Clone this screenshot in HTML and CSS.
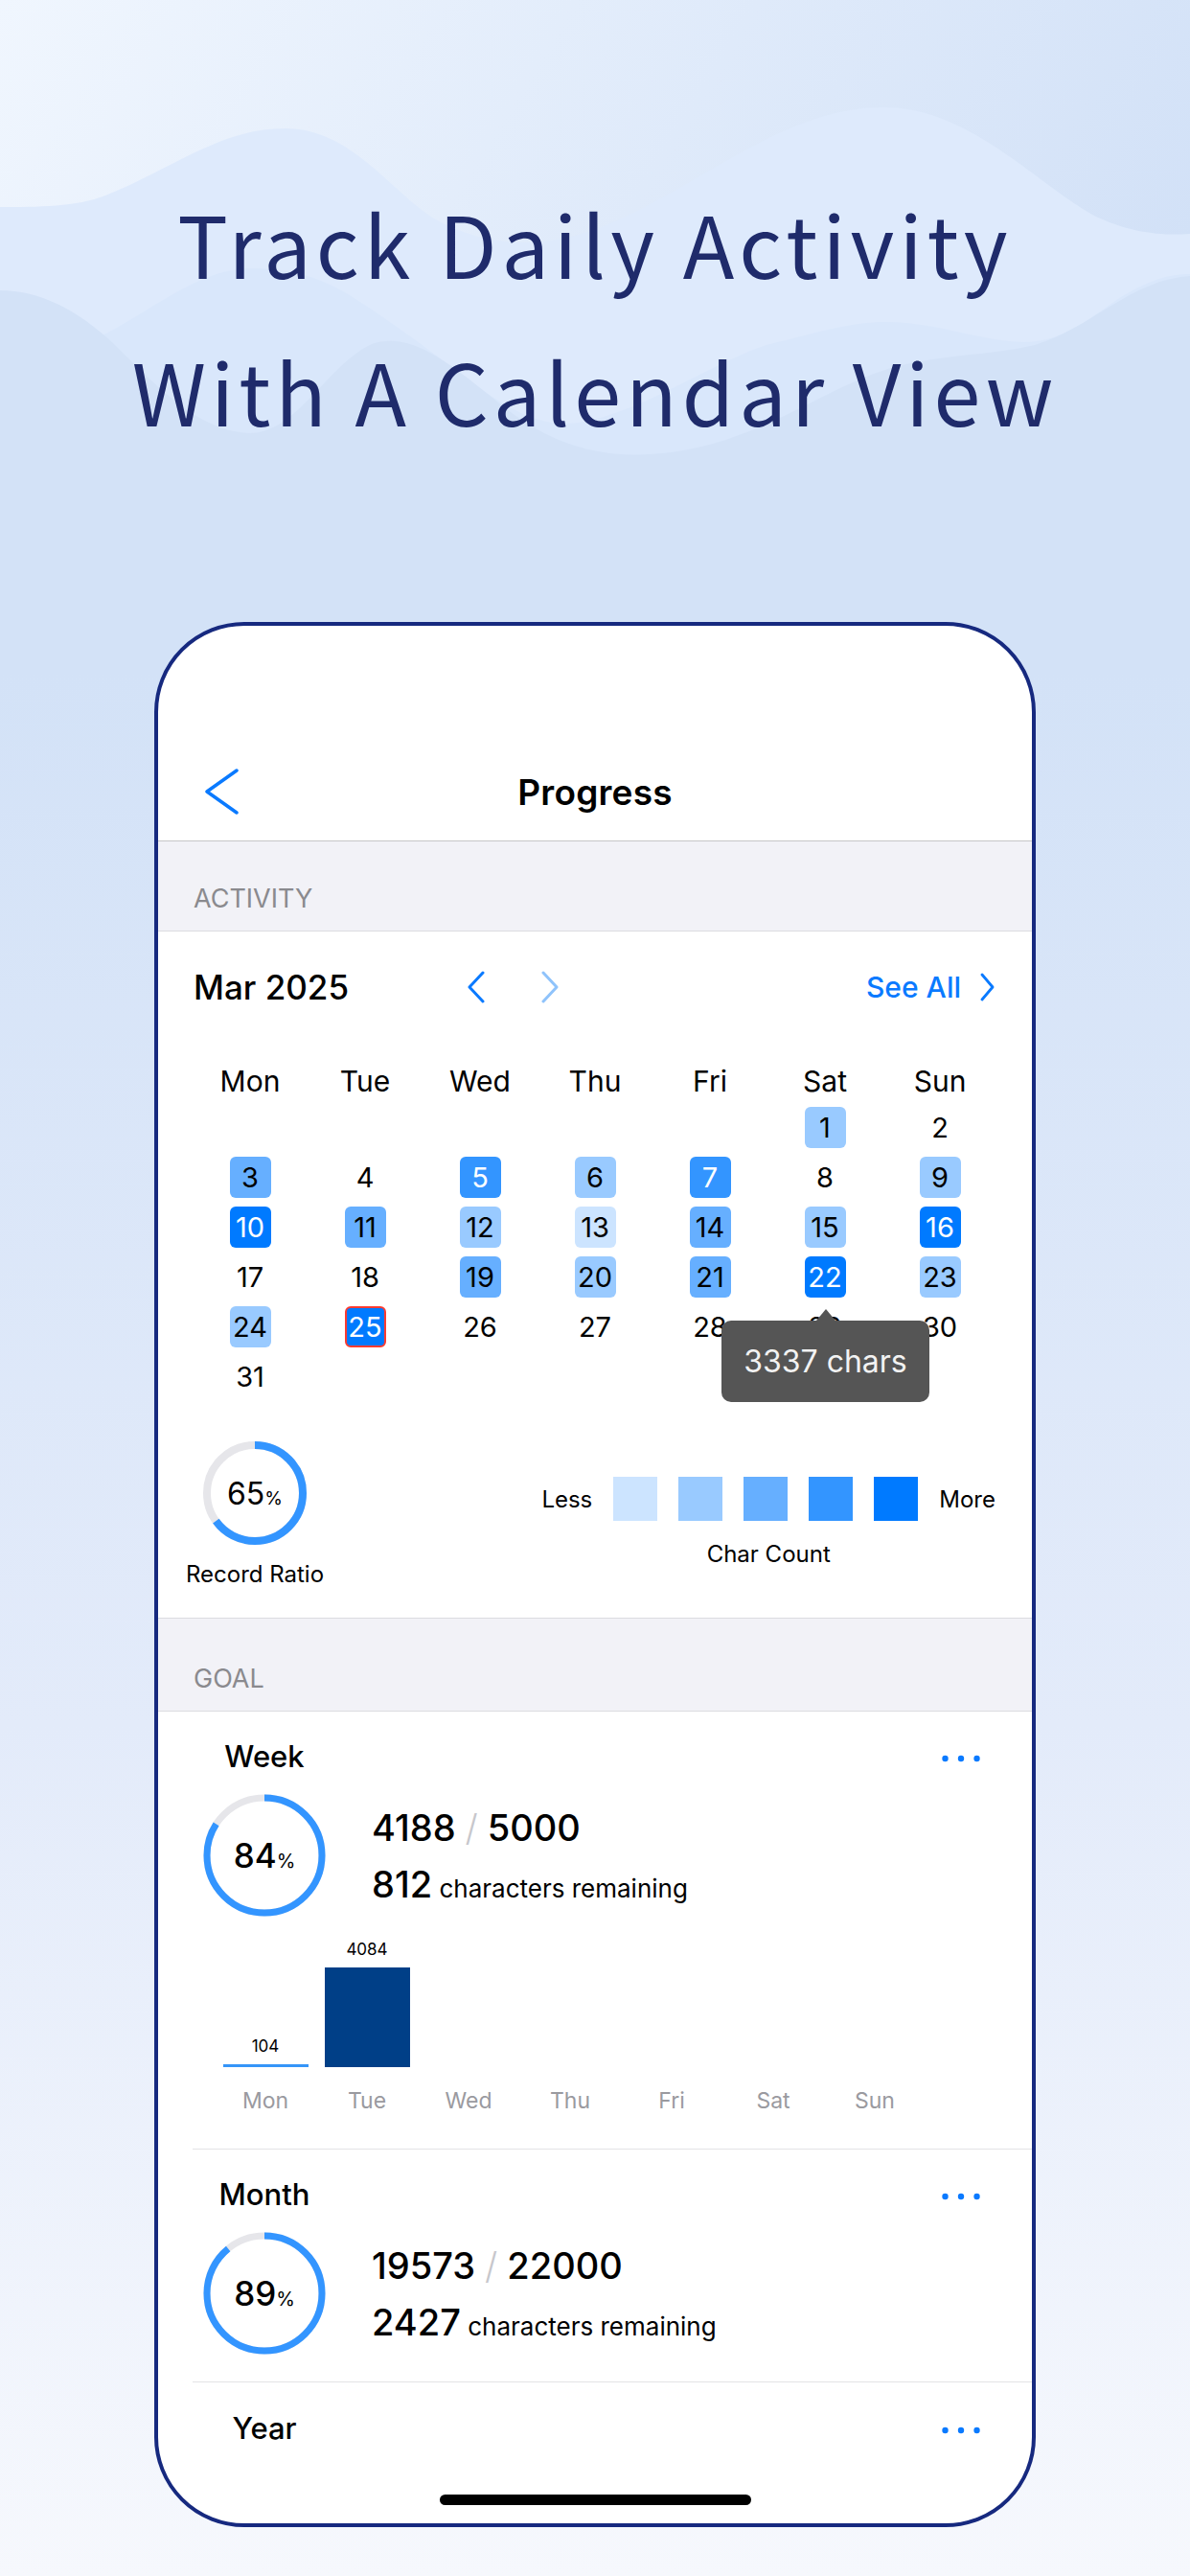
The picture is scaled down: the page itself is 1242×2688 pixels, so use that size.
FILE: index.html
```html
<!DOCTYPE html>
<html lang="en">
<head>
    <meta charset="UTF-8">
    <meta name="viewport" content="width=device-width, initial-scale=1.0">
    <title>Progress</title>
    <link rel="stylesheet" href="styles.css">
</head>
<body>
<div class="page">
    <!-- background waves -->
    <svg class="waves" viewBox="0 0 1242 700" preserveAspectRatio="none">
        <defs>
            <linearGradient id="sky" x1="0" y1="0" x2="1" y2="0.35">
                <stop offset="0" stop-color="#f0f6fe"/>
                <stop offset="1" stop-color="#d2e1f7"/>
            </linearGradient>
        </defs>
        <rect width="1242" height="700" fill="url(#sky)"/>
        <path d="M0,216 C40,216 80,216 110,204 C180,176 230,134 297,134 C370,134 410,205 460,232 C520,262 580,258 640,232 C740,188 820,112 923,112 C1010,112 1080,190 1140,224 C1180,244 1215,246 1242,244 L1242,700 L0,700 Z" fill="#deeafc"/>
        <path d="M0,380 C50,380 80,362 111,348 C160,322 210,280 261,280 C300,280 330,288 360,305 C400,330 430,352 470,382 C520,420 560,450 610,440 C680,425 740,380 800,360 C860,345 890,336 923,336 C980,336 1020,356 1069,357 C1110,357 1140,330 1170,310 C1200,292 1220,286 1242,286 L1242,700 L0,700 Z" fill="#d9e7fb"/>
        <path d="M0,303 C40,303 80,322 120,360 C170,410 210,450 260,452 C310,452 340,382 388,359 C430,345 470,380 520,420 C570,460 620,482 700,472 C800,458 860,404 930,384 C990,368 1030,372 1080,360 C1140,342 1180,292 1242,288 L1242,700 L0,700 Z" fill="#d3e2f7"/>
    </svg>

    <h1 class="headline">
        <span>Track Daily Activity</span>
        <span>With A Calendar View</span>
    </h1>

    <div class="phone">
        <div class="status-bar"></div>

        <div class="nav-bar">
            <svg class="back" width="35" height="48" viewBox="0 0 35 48">
                <path d="M33 2 L2 24 L33 46" fill="none" stroke="#0a7aff" stroke-width="3.5" stroke-linecap="round" stroke-linejoin="round"/>
            </svg>
            <h2>Progress</h2>
            <span></span>
        </div>

        <div class="section-title">ACTIVITY</div>

        <div class="card calendar">
            <div class="cal-head">
                <span class="month">Mar 2025</span>
                <div class="month-nav">
                    <svg width="19" height="34" viewBox="0 0 19 34"><path d="M17 2 L3 17 L17 32" fill="none" stroke="#0a7aff" stroke-width="3" stroke-linecap="round" stroke-linejoin="round"/></svg>
                    <svg width="19" height="34" viewBox="0 0 19 34"><path d="M2 2 L16 17 L2 32" fill="none" stroke="#8fc3fb" stroke-width="3" stroke-linecap="round" stroke-linejoin="round"/></svg>
                </div>
                <a class="see-all">See All
                    <svg width="15" height="30" viewBox="0 0 15 30"><path d="M2 2 L13 15 L2 28" fill="none" stroke="#0a7aff" stroke-width="2.8" stroke-linecap="round" stroke-linejoin="round"/></svg>
                </a>
            </div>

            <div class="weekdays">
                <span>Mon</span><span>Tue</span><span>Wed</span><span>Thu</span><span>Fri</span><span>Sat</span><span>Sun</span>
            </div>

            <div class="days">
                <i></i><i></i><i></i><i></i><i></i>
                <span class="l2">1</span><span>2</span>
                <span class="l3">3</span><span>4</span><span class="l4">5</span><span class="l2">6</span><span class="l4">7</span><span>8</span><span class="l2">9</span>
                <span class="l5">10</span><span class="l3">11</span><span class="l2">12</span><span class="l1">13</span><span class="l3">14</span><span class="l2">15</span><span class="l5">16</span>
                <span>17</span><span>18</span><span class="l3">19</span><span class="l2">20</span><span class="l3">21</span><span class="l5">22<em class="tip">3337 chars</em></span><span class="l2">23</span>
                <span class="l2">24</span><span class="l5 today">25</span><span>26</span><span>27</span><span>28</span><span>29</span><span>30</span>
                <span>31</span>
            </div>

            <div class="cal-foot">
                <div class="ratio">
                    <div class="ring ring-sm">
                        <svg width="108" height="108" viewBox="0 0 108 108">
                            <circle cx="54" cy="54" r="50" class="track" stroke-width="8"/>
                            <circle cx="54" cy="54" r="50" class="arc" stroke-width="8" stroke-dasharray="204.2 400" transform="rotate(-90 54 54)"/>
                        </svg>
                        <span class="ring-value">65<small>%</small></span>
                    </div>
                    <span class="ratio-label">Record Ratio</span>
                </div>
                <div class="legend">
                    <div class="legend-row">
                        <span>Less</span>
                        <i class="l1"></i><i class="l2"></i><i class="l3"></i><i class="l4"></i><i class="l5"></i>
                        <span>More</span>
                    </div>
                    <span class="legend-label">Char Count</span>
                </div>
            </div>
        </div>

        <div class="section-title goal-title">GOAL</div>

        <div class="card goals">
            <div class="goal">
                <div class="goal-head">
                    <span class="goal-name">Week</span>
                    <svg class="dots" width="40" height="8" viewBox="0 0 40 8"><circle cx="3.5" cy="4" r="3.2"/><circle cx="20" cy="4" r="3.2"/><circle cx="36.5" cy="4" r="3.2"/></svg>
                </div>
                <div class="goal-body">
                    <div class="ring">
                        <svg width="128" height="128" viewBox="0 0 128 128">
                            <circle cx="64" cy="64" r="60" class="track" stroke-width="7"/>
                            <circle cx="64" cy="64" r="60" class="arc" stroke-width="7" stroke-dasharray="316.7 400" transform="rotate(-90 64 64)"/>
                        </svg>
                        <span class="ring-value">84<small>%</small></span>
                    </div>
                    <div class="goal-nums">
                        <div class="count">4188<span class="slash">/</span>5000</div>
                        <div class="remain"><b>812</b> characters remaining</div>
                    </div>
                </div>
                <div class="chart">
                    <div class="bars">
                        <div class="col"><span class="val">104</span><i class="bar" style="height: 3px"></i></div>
                        <div class="col"><span class="val">4084</span><i class="bar dark" style="height: 104px"></i></div>
                        <div class="col"></div>
                        <div class="col"></div>
                        <div class="col"></div>
                        <div class="col"></div>
                        <div class="col"></div>
                    </div>
                    <div class="axis">
                        <span>Mon</span><span>Tue</span><span>Wed</span><span>Thu</span><span>Fri</span><span>Sat</span><span>Sun</span>
                    </div>
                </div>
            </div>

            <div class="goal">
                <div class="goal-head">
                    <span class="goal-name">Month</span>
                    <svg class="dots" width="40" height="8" viewBox="0 0 40 8"><circle cx="3.5" cy="4" r="3.2"/><circle cx="20" cy="4" r="3.2"/><circle cx="36.5" cy="4" r="3.2"/></svg>
                </div>
                <div class="goal-body month-body">
                    <div class="ring">
                        <svg width="128" height="128" viewBox="0 0 128 128">
                            <circle cx="64" cy="64" r="60" class="track" stroke-width="7"/>
                            <circle cx="64" cy="64" r="60" class="arc" stroke-width="7" stroke-dasharray="335.5 400" transform="rotate(-90 64 64)"/>
                        </svg>
                        <span class="ring-value">89<small>%</small></span>
                    </div>
                    <div class="goal-nums">
                        <div class="count">19573<span class="slash">/</span>22000</div>
                        <div class="remain"><b>2427</b> characters remaining</div>
                    </div>
                </div>
            </div>

            <div class="goal last">
                <div class="goal-head">
                    <span class="goal-name">Year</span>
                    <svg class="dots" width="40" height="8" viewBox="0 0 40 8"><circle cx="3.5" cy="4" r="3.2"/><circle cx="20" cy="4" r="3.2"/><circle cx="36.5" cy="4" r="3.2"/></svg>
                </div>
            </div>
        </div>

        <div class="home-indicator"></div>
    </div>
</div>
</body>
</html>
```

FILE: styles.css
```css
* {
    box-sizing: border-box;
}
body {
    margin: 0;
    width: 1242px;
    height: 2688px;
    overflow: hidden;
    background: linear-gradient(180deg, #d3e2f7 0, #d3e2f7 700px, #e3ebfa 1800px, #f6f8fd 2688px);
    font-family: Inter, "Liberation Sans", sans-serif;
    color: #000;
}
.page {
    position: relative;
    height: 2688px;
}
.waves {
    position: absolute;
    top: 0;
    left: 0;
    width: 1242px;
    height: 700px;
}

/* headline */
.headline {
    position: relative;
    margin: 0;
    padding-top: 176px;
    text-align: center;
    font-family: "Noto Sans CJK SC", sans-serif;
    font-weight: 400;
    font-size: 88px;
    line-height: 154px;
    letter-spacing: 5px;
    color: #1f2b6b;
}
.headline span {
    display: block;
}

/* phone frame */
.phone {
    position: relative;
    width: 920px;
    height: 1988px;
    margin: 165px auto 0;
    border: 4px solid #16297f;
    border-radius: 94px;
    background: #fff;
    overflow: hidden;
    display: flex;
    flex-direction: column;
}
.status-bar {
    height: 120px;
    flex: none;
}
.nav-bar {
    height: 105px;
    flex: none;
    display: grid;
    grid-template-columns: 1fr auto 1fr;
    align-items: center;
    border-bottom: 1px solid #c6c6c8;
}
.back {
    margin-left: 49px;
    margin-top: 2px;
}
.nav-bar h2 {
    margin: 0;
    margin-top: 3px;
    font-size: 37px;
    font-weight: 600;
    letter-spacing: 0.2px;
}

.section-title {
    height: 94px;
    flex: none;
    background: #f2f2f7;
    border-bottom: 1px solid #dcdce0;
    padding: 0 0 16px 37px;
    display: flex;
    align-items: flex-end;
    font-size: 27px;
    line-height: 34px;
    color: #8a8a8e;
}
.goal-title {
    height: 97px;
}

/* calendar */
.calendar {
    flex: none;
    padding: 33px 36px 30px;
    border-bottom: 1px solid #dcdce0;
}
.cal-head {
    height: 50px;
    display: flex;
    align-items: center;
}
.month {
    width: 286px;
    padding-left: 1px;
    font-size: 35px;
    font-weight: 500;
}
.month-nav {
    display: flex;
    gap: 59px;
}
.see-all {
    margin-left: auto;
    margin-right: 3px;
    display: flex;
    align-items: center;
    gap: 20px;
    color: #0a7aff;
    font-size: 30px;
    font-weight: 500;
}
.weekdays {
    margin-top: 53px;
    display: grid;
    grid-template-columns: repeat(7, 120px);
    font-size: 30px;
    line-height: 40px;
    text-align: center;
}
.days {
    margin-top: 7px;
    display: grid;
    grid-template-columns: repeat(7, 120px);
    grid-auto-rows: 43px;
    row-gap: 9px;
}
.days span {
    position: relative;
    justify-self: center;
    width: 43px;
    height: 43px;
    border-radius: 6px;
    display: flex;
    align-items: center;
    justify-content: center;
    font-size: 29px;
}
.l1 { background: #cce4ff; }
.l2 { background: #99caff; }
.l3 { background: #66afff; }
.l4 { background: #3395ff; color: #fff; }
.l5 { background: #007aff; color: #fff; }
.days .today {
    border: 2px solid #ff3b30;
}
.tip {
    position: absolute;
    z-index: 2;
    top: calc(100% + 24px);
    left: 50%;
    width: 217px;
    height: 85px;
    margin-left: -108px;
    border-radius: 10px;
    background: #555;
    color: #f2f2f2;
    font-style: normal;
    font-size: 32px;
    display: flex;
    align-items: center;
    justify-content: center;
}
.tip::before {
    content: "";
    position: absolute;
    top: -12px;
    left: 50%;
    margin-left: -10px;
    border-style: solid;
    border-color: transparent transparent #555;
    border-width: 0 10px 12px;
}

.cal-foot {
    margin-top: 46px;
    display: flex;
}
.ratio {
    width: 130px;
    display: flex;
    flex-direction: column;
    align-items: center;
}
.ratio-label {
    margin-top: 16px;
    font-size: 24px;
    line-height: 30px;
    white-space: nowrap;
}
.ring {
    display: grid;
    place-items: center;
    flex: none;
}
.ring > * {
    grid-area: 1 / 1;
}
.ring .track {
    fill: none;
    stroke: #e6e6ea;
}
.ring .arc {
    fill: none;
    stroke: #3395ff;
}
.ring-value {
    font-size: 35px;
    font-weight: 500;
}
.ring-value small {
    font-size: 20px;
    font-weight: 400;
}
.ring-sm .ring-value {
    font-size: 32px;
    font-weight: 400;
}
.ring-sm .ring-value small {
    font-size: 19px;
}
.legend {
    margin-left: auto;
    margin-right: 2px;
    padding-top: 37px;
    display: flex;
    flex-direction: column;
    align-items: center;
}
.legend-row {
    display: flex;
    align-items: center;
    gap: 22px;
    height: 46px;
    font-size: 24px;
}
.legend-row i {
    width: 46px;
    height: 46px;
}
.legend-label {
    margin-top: 20px;
    font-size: 24px;
    line-height: 30px;
}

/* goals */
.goals {
    flex: none;
    padding-left: 36px;
}
.goal {
    border-bottom: 1px solid #e3e3e6;
    padding-top: 27px;
}
.goal.last {
    border-bottom: none;
    padding-top: 28px;
}
.goal-head {
    height: 38px;
    display: flex;
    align-items: center;
}
.goal-name {
    width: 128px;
    margin-left: 11px;
    text-align: center;
    font-size: 31px;
    font-weight: 500;
}
.dots {
    margin-left: auto;
    margin-right: 54px;
    margin-top: 6px;
    fill: #0a7aff;
}
.goal-body {
    margin-top: 20px;
    margin-left: 11px;
    display: flex;
    align-items: center;
    gap: 48px;
}
.month-body {
    padding-bottom: 28px;
}
.goal-nums {
    padding-top: 7px;
    line-height: 59px;
}
.count {
    font-size: 38px;
    font-weight: 500;
}
.slash {
    margin: 0 10px;
    color: #c7c7cc;
    font-weight: 300;
}
.remain {
    font-size: 26px;
}
.remain b {
    font-size: 38px;
    font-weight: 500;
}

.chart {
    padding: 12px 0 35px 23px;
}
.bars {
    height: 145px;
    display: grid;
    grid-template-columns: repeat(7, 106px);
}
.col {
    display: flex;
    flex-direction: column;
    justify-content: flex-end;
    align-items: center;
}
.val {
    margin-bottom: 8px;
    font-size: 17px;
    line-height: 22px;
}
.bar {
    width: 89px;
    background: #3595f8;
}
.bar.dark {
    background: #003f87;
}
.axis {
    margin-top: 20px;
    display: grid;
    grid-template-columns: repeat(7, 106px);
    text-align: center;
    font-size: 23px;
    line-height: 30px;
    color: #9a9a9f;
}

.home-indicator {
    position: absolute;
    left: 294px;
    bottom: 19px;
    width: 325px;
    height: 11px;
    border-radius: 6px;
    background: #000;
}
```
